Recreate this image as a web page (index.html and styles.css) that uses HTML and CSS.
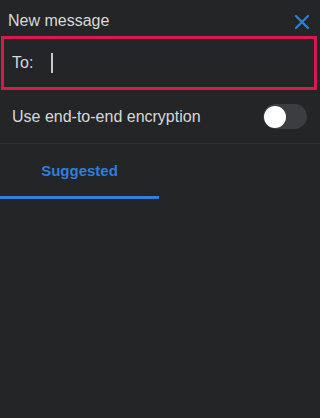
FILE: index.html
```html
<!DOCTYPE html>
<html>
<head>
<meta charset="utf-8">
<link rel="stylesheet" href="styles.css">
</head>
<body>
<div class="screen">
  <header class="header">
    <span class="title">New message</span>
    <svg class="close" width="16" height="16" viewBox="0 0 16 16"><path d="M2 2 L14 14 M14 2 L2 14" stroke="#2f80de" stroke-width="2.2" stroke-linecap="round"/></svg>
  </header>
  <div class="to-box">
    <span class="to-label">To:</span>
    <span class="cursor"></span>
  </div>
  <div class="enc-row">
    <span class="enc-label">Use end-to-end encryption</span>
    <span class="toggle"><span class="knob"></span></span>
  </div>
  <div class="tabs">
    <div class="tab active">Suggested</div>
  </div>
</div>
</body>
</html>
```
FILE: styles.css
```css
html, body {
  margin: 0;
  padding: 0;
  background: #242527;
}
.screen {
  width: 320px;
  height: 418px;
  background: #242527;
  font-family: "Liberation Sans", Arial, sans-serif;
  color: #d9d9d9;
}
.header {
  height: 36px;
  box-sizing: border-box;
  padding: 6px 10px 0 8px;
  display: flex;
  align-items: center;
  justify-content: space-between;
}
.title {
  font-size: 16px;
}
.close {
  display: block;
  margin-top: 1px;
}
.to-box {
  margin: 0 3px 0 1px;
  height: 54px;
  box-sizing: border-box;
  border: 3px solid #d61a4f;
  display: flex;
  align-items: center;
  padding-left: 8px;
}
.to-label {
  font-size: 16px;
  width: 39px;
}
.cursor {
  width: 1.5px;
  height: 20px;
  background: #c8c8c8;
}
.enc-row {
  height: 53px;
  display: flex;
  align-items: center;
  justify-content: space-between;
  padding: 0 13px 0 12px;
  border-bottom: 1px solid #2d2e30;
}
.enc-label {
  font-size: 16px;
}
.toggle {
  width: 44px;
  height: 25px;
  border-radius: 13px;
  background: #3c3d40;
  display: flex;
  align-items: center;
  padding-left: 1px;
  box-sizing: border-box;
}
.knob {
  width: 22px;
  height: 22px;
  border-radius: 50%;
  background: #ffffff;
}
.tabs {
  display: flex;
}
.tab {
  width: 159px;
  height: 55px;
  box-sizing: border-box;
  display: flex;
  align-items: center;
  justify-content: center;
  font-size: 15px;
  font-weight: bold;
  color: #2f7fdb;
  padding-top: 1px;
}
.tab.active {
  border-bottom: 3px solid #2f7fdb;
}
```
